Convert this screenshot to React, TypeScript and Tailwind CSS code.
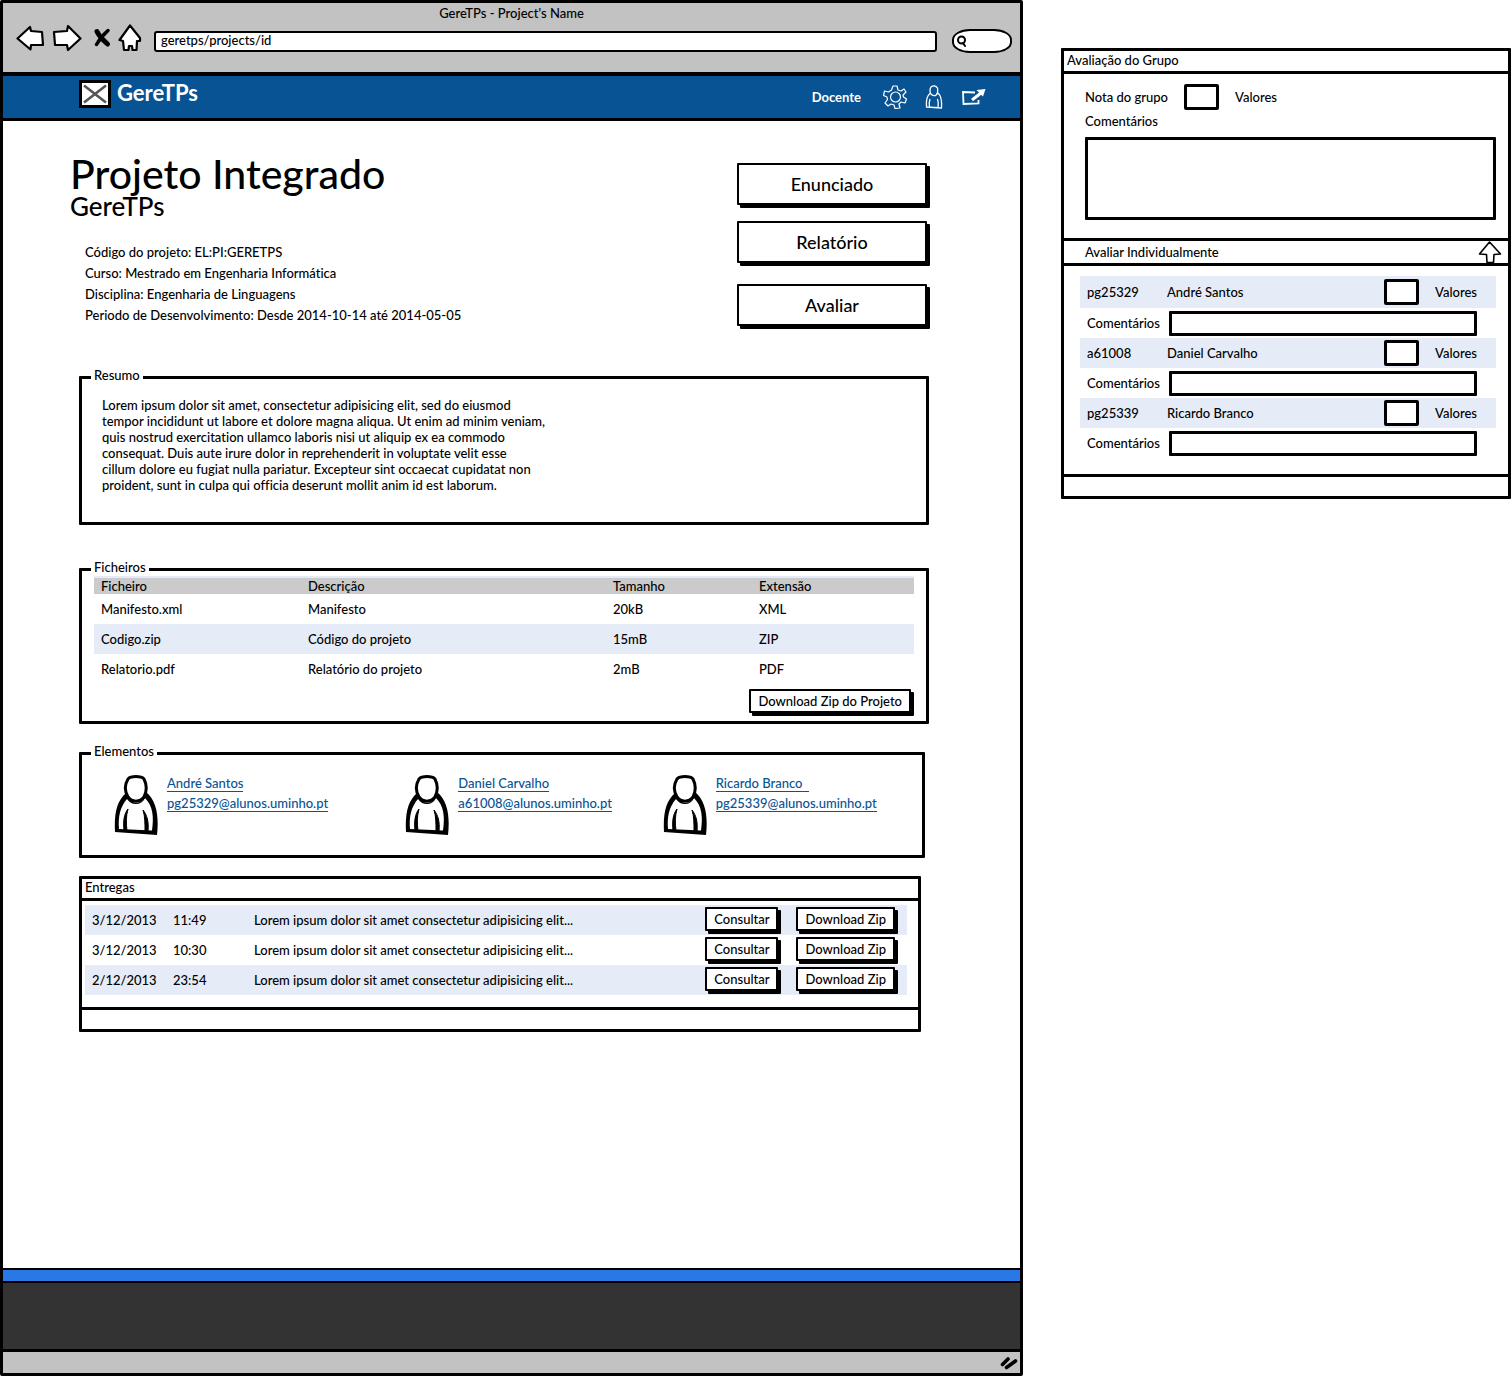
import type { ReactNode } from "react";

const files = [
  ["Manifesto.xml", "Manifesto", "20kB", "XML"],
  ["Codigo.zip", "Código do projeto", "15mB", "ZIP"],
  ["Relatorio.pdf", "Relatório do projeto", "2mB", "PDF"],
];

const members = [
  { id: "pg25329", name: "André Santos", link: "André Santos" },
  { id: "a61008", name: "Daniel Carvalho", link: "Daniel Carvalho" },
  { id: "pg25339", name: "Ricardo Branco", link: "Ricardo Branco\u00a0\u00a0" },
];

const deliveries = [
  ["3/12/2013", "11:49"],
  ["3/12/2013", "10:30"],
  ["2/12/2013", "23:54"],
];

const summary = `Lorem ipsum dolor sit amet, consectetur adipisicing elit, sed do eiusmod
tempor incididunt ut labore et dolore magna aliqua. Ut enim ad minim veniam,
quis nostrud exercitation ullamco laboris nisi ut aliquip ex ea commodo
consequat. Duis aute irure dolor in reprehenderit in voluptate velit esse
cillum dolore eu fugiat nulla pariatur. Excepteur sint occaecat cupidatat non
proident, sunt in culpa qui officia deserunt mollit anim id est laborum.`;

function BigButton({ children }: { children: ReactNode }) {
  return (
    <button className="h-[42px] w-full rounded-[1px] border-2 border-black bg-white text-lg leading-6 shadow-[3px_3px_0_#000]">
      {children}
    </button>
  );
}

function SmallButton({ children }: { children: ReactNode }) {
  return (
    <button className="h-6 rounded-[1px] border-2 border-black bg-white px-[7px] leading-4 whitespace-nowrap shadow-[3px_3px_0_#000]">
      {children}
    </button>
  );
}

function Group({ title, className, children }: { title: string; className: string; children: ReactNode }) {
  return (
    <fieldset className={`min-w-0 rounded-[1px] border-3 border-black ${className}`}>
      <legend className="ml-[9px] px-[3px] pb-1 leading-4">{title}</legend>
      {children}
    </fieldset>
  );
}

function Person() {
  return (
    <svg viewBox="0 0 44 60" className="h-[60px] w-11 shrink-0" aria-hidden="true">
      <path d="M12 18C3 26 0 38 1 57L43 60C45 42 43 26 32 17C31 24 27 28 22 28C17 27 14 24 12 18Z" fill="#000" />
      <path d="M13 24C6 32 4 42 5 54L38 55.500C40 42 39 31 31 23C29 27 26 29 22 29C18 29 15 27 13 24Z" fill="#fff" />
      <path d="M14 34C10 39 9 46 10 56L13 56C12 48 12 41 14 34Z" fill="#000" stroke="#000" />
      <path d="M29 35C31 41 31 49 31 56L34 56C35 47 33 40 29 35Z" fill="#000" stroke="#000" />
      <path d="M14 4C17 .800 27 .800 30 4C33 10 33 16 30 22C26 27.500 18 27.500 14 22C10.500 16 11 9 14 4Z" fill="#fff" stroke="#000" strokeWidth="3" />
    </svg>
  );
}

function BrowserBar() {
  return (
    <header className="flex h-[69px] flex-col bg-[#c2c2c2]">
      <h2 className="pt-0.5 text-center leading-4">GereTPs - Project's Name</h2>
      <div className="mt-0.5 flex items-center pr-2 pl-[13px]">
        <button aria-label="Voltar">
          <svg viewBox="0 0 28 26" className="h-[26px] w-7" fill="#fff" stroke="#000" strokeWidth="2.2" strokeLinejoin="round">
            <path d="M1.5 13.5L14 2L15 6L26 7L27 20L15 20L14.500 24.500Z" />
          </svg>
        </button>
        <button aria-label="Avançar" className="ml-2">
          <svg viewBox="0 0 30 28" className="h-7 w-[30px]" fill="#fff" stroke="#000" strokeWidth="2.2" strokeLinejoin="round">
            <path d="M2 8L15 7L16 2L28.500 14.500L16 26L15 21L3 21Z" />
          </svg>
        </button>
        <button aria-label="Parar" className="ml-2.5">
          <svg viewBox="0 0 20 20" className="size-5" fill="none" stroke="#000" strokeLinecap="round">
            <path d="M5 3.500C7 8 11 12 15.500 16" strokeWidth="5" />
            <path d="M16 2.500C11 7 7 12 4.500 16.500" strokeWidth="3.500" />
          </svg>
        </button>
        <button aria-label="Início" className="ml-1.5">
          <svg viewBox="0 0 24 28" className="h-7 w-6" fill="#fff" stroke="#000" strokeWidth="2.200" strokeLinejoin="round">
            <path d="M12 1.500L22 14L22 17L19 17L18.500 26L14.500 26L14 22L11 22L10.500 26L6 26L5 17L1.500 16Z" />
          </svg>
        </button>
        <input
          aria-label="Endereço"
          defaultValue="geretps/projects/id"
          className="mt-1.5 ml-3 h-[21px] min-w-0 flex-1 rounded-[3px] border-2 border-black bg-white px-[5px] pb-0.5 leading-4"
        />
        <div className="relative mt-1.5 ml-[15px]">
          <input aria-label="Pesquisar" className="h-6 w-[60px] rounded-[30%/45%] border-2 border-black bg-white pl-4" />
          <svg viewBox="0 0 12 14" className="absolute top-[6px] left-1 h-3.5 w-3" fill="none" stroke="#000" strokeWidth="2" strokeLinecap="round">
            <circle cx="5.500" cy="5" r="3.500" />
            <path d="M7 8L9 11" />
          </svg>
        </div>
      </div>
    </header>
  );
}

function NavBar() {
  return (
    <nav className="flex h-[49px] items-center border-t-4 border-b-3 border-black bg-[#085394] pr-[33px] pl-[76px] text-white">
      <svg viewBox="0 0 32 28" className="-mt-1.5 h-7 w-8" aria-hidden="true">
        <rect x="1.500" y="1.500" width="29" height="25" fill="#fff" stroke="#000" strokeWidth="3" />
        <path d="M5 5.500L27 22.500M27 5.500L5 22.500" stroke="#555" strokeWidth="2.600" />
      </svg>
      <span className="-mt-2 ml-1.5 text-[22px] leading-6 font-bold">GereTPs</span>
      <span className="ml-auto font-bold">Docente</span>
      <button aria-label="Definições" className="ml-[22px]">
        <svg viewBox="0 0 24 24" className="size-6" fill="none" stroke="#fff" strokeWidth="1.200" strokeLinejoin="round">
          <path d="M10 1L14 1L15 5L18 6L21 4L23 7L20 10L20.500 12L23.500 14L22 18L18 17L16 19L17 23L12 23.500L11 20L8 19L5 21L2 18L4.500 14.500L4 12L.500 10.500L1.500 6L5.500 7L8.500 5Z" />
          <circle cx="12.500" cy="12" r="5" />
        </svg>
      </button>
      <button aria-label="Perfil" className="ml-[18px]">
        <svg viewBox="0 0 18 24" className="h-6 w-[18px]" fill="none" stroke="#fff" strokeWidth="1.300" strokeLinejoin="round">
          <path d="M6 2C8 .500 11 .500 12.500 3C13 6 13 9 10.500 10.500C7 11 5 9 5 6C5 4 5 3 6 2ZM5.500 8C2 11 1 14 1.500 22L16.500 23C17 16 16.500 11 13 8M5 14C4 17 4 19 4.500 22M12.500 14C13.500 17 13.500 20 13 23" />
        </svg>
      </button>
      <button aria-label="Sair" className="ml-[18px]">
        <svg viewBox="0 0 26 18" className="h-[18px] w-[26px]" fill="none" stroke="#fff" strokeWidth="1.800">
          <path d="M14 4.500L2 4L2.500 16L17.500 15.500L17.500 12" />
          <path d="M11 12L20 5" strokeWidth="3" />
          <path d="M15.500 2L24.500 1L22 8.500Z" fill="#fff" stroke="none" />
        </svg>
      </button>
    </nav>
  );
}

function Project() {
  return (
    <main className="flex-1 pt-[33px] pr-[91px] pb-10 pl-[67px]">
      <div className="flex items-start justify-between">
        <div>
          <h1 className="text-[41px] leading-10">Projeto Integrado</h1>
          <p className="text-[26px] leading-6">GereTPs</p>
          <div className="mt-6 ml-[15px] leading-[21px]">
            <p>Código do projeto: EL:PI:GERETPS</p>
            <p>Curso: Mestrado em Engenharia Informática</p>
            <p>Disciplina: Engenharia de Linguagens</p>
            <p>Periodo de Desenvolvimento: Desde 2014-10-14 até 2014-05-05</p>
          </div>
        </div>
        <div className="mt-[9px] mr-0.5 flex w-[190px] flex-col">
          <BigButton>Enunciado</BigButton>
          <div className="mt-4 mb-[21px]">
            <BigButton>Relatório</BigButton>
          </div>
          <BigButton>Avaliar</BigButton>
        </div>
      </div>

      <div className="ml-[9px]">
        <Group title="Resumo" className="mt-[41px] pb-[29px]">
          <p className="pt-2.5 pl-5 leading-4 whitespace-pre-line">{summary}</p>
        </Group>

        <Group title="Ficheiros" className="mt-[34px] pb-2">
          <div className="px-3">
            <table className="-mt-[3px] w-full table-fixed border-t-2 border-[#e6ecf7] text-left">
              <colgroup>
                <col className="w-[207px]" />
                <col className="w-[305px]" />
                <col className="w-[146px]" />
                <col />
              </colgroup>
              <thead className="bg-[#cbcbcb] leading-4">
                <tr>
                  {["Ficheiro", "Descrição", "Tamanho", "Extensão"].map((head) => (
                    <th key={head} className="pl-[7px] font-medium">{head}</th>
                  ))}
                </tr>
              </thead>
              <tbody>
                {files.map((row) => (
                  <tr key={row[0]} className="h-[30px] even:bg-[#e6ecf7]">
                    {row.map((cell) => (
                      <td key={cell} className="pl-[7px]">{cell}</td>
                    ))}
                  </tr>
                ))}
              </tbody>
            </table>
            <div className="mt-[5px] mr-[3px] flex justify-end">
              <SmallButton>Download Zip do Projeto</SmallButton>
            </div>
          </div>
        </Group>

        <Group title="Elementos" className="mt-[19px] mr-1 pb-5">
          <ul className="grid grid-cols-[291fr_257fr_259fr] pt-3 pl-8">
            {members.map((m) => (
              <li key={m.id} className="flex">
                <Person />
                <div className="ml-[9px] flex flex-col items-start gap-[3px] text-[#085394]">
                  <a href="#perfil" className="border-b border-[#085394] leading-4">{m.link}</a>
                  <a href={`mailto:${m.id}@alunos.uminho.pt`} className="border-b border-[#085394] leading-4">
                    {m.id}@alunos.uminho.pt
                  </a>
                </div>
              </li>
            ))}
          </ul>
        </Group>

        <section className="mt-[18px] mr-2 rounded-[1px] border-3 border-black">
          <h2 className="border-b-3 border-black px-[3px] pb-[3px] leading-4">Entregas</h2>
          <div className="pt-1 pr-[11px] pb-3 pl-[3px]">
            <table className="w-full">
              <tbody>
                {deliveries.map(([date, time]) => (
                  <tr key={time} className="h-[30px] odd:bg-[#e6ecf7]">
                    <td className="w-[81px] pl-[7px]">{date}</td>
                    <td className="w-[81px] pl-[7px]">{time}</td>
                    <td className="pl-[7px]">Lorem ipsum dolor sit amet consectetur adipisicing elit...</td>
                    <td className="pr-3">
                      <div className="flex justify-end gap-[18px] pb-0.5">
                        <SmallButton>Consultar</SmallButton>
                        <SmallButton>Download Zip</SmallButton>
                      </div>
                    </td>
                  </tr>
                ))}
              </tbody>
            </table>
          </div>
          <div className="h-[22px] border-t-3 border-black" />
        </section>
      </div>
    </main>
  );
}

function Grading() {
  return (
    <aside className="mt-12 w-[450px] shrink-0 rounded-[1px] border-3 border-black">
      <h2 className="border-b-3 border-black px-[3px] pb-0.5 leading-[18px]">Avaliação do Grupo</h2>
      <div className="pt-2.5 pr-3 pb-[18px] pl-[21px]">
        <div className="flex items-center">
          <label htmlFor="group-grade" className="w-[99px]">Nota do grupo</label>
          <input id="group-grade" className="h-[26px] w-[35px] rounded-[2px] border-3 border-black bg-white text-center" />
          <span className="ml-4">Valores</span>
        </div>
        <label htmlFor="group-comments" className="mt-[3px] block leading-4">Comentários</label>
        <textarea id="group-comments" className="mt-2 block h-[83px] w-full resize-none rounded-[1px] border-3 border-black bg-white px-1" />
      </div>
      <div className="flex h-7 items-center justify-between border-y-3 border-black pr-1.5 pl-[21px]">
        <h3>Avaliar Individualmente</h3>
        <button aria-label="Recolher">
          <svg viewBox="0 0 24 22" className="h-[22px] w-6" fill="#fff" stroke="#000" strokeWidth="1.600" strokeLinejoin="round">
            <path d="M11.500 1L22.500 13L16 13.500L15.500 21.500L9 21.500L8.500 13.500L1.500 13Z" />
          </svg>
        </button>
      </div>
      <div className="pt-2.5 pr-3 pb-4 pl-4">
        {members.map((m, i) => (
          <div key={m.id}>
            <div className={`flex items-center bg-[#e6ecf7] pr-[19px] pl-[7px] ${i === 0 ? "h-8" : "h-[30px]"}`}>
              <span className="w-20">{m.id}</span>
              <label htmlFor={`grade-${m.id}`}>{m.name}</label>
              <input id={`grade-${m.id}`} className="ml-auto h-[26px] w-[35px] rounded-[2px] border-3 border-black bg-white text-center" />
              <span className="w-[58px] pl-4">Valores</span>
            </div>
            <div className="flex h-[30px] items-center pr-[19px] pl-[7px]">
              <label htmlFor={`comment-${m.id}`} className="w-[82px] shrink-0">Comentários</label>
              <input id={`comment-${m.id}`} className="h-[25px] min-w-0 flex-1 rounded-[1px] border-3 border-black bg-white px-1" />
            </div>
          </div>
        ))}
      </div>
      <div className="h-[22px] border-t-3 border-black" />
    </aside>
  );
}

export default function App() {
  return (
    <div className="flex min-h-screen items-stretch gap-[38px] bg-white font-[Lato,'Open_Sans',sans-serif] text-[13px] leading-4 font-medium text-black [font-variant-ligatures:none]">
      <div className="flex min-w-0 flex-1 flex-col rounded-[2px] border-3 border-black">
        <BrowserBar />
        <NavBar />
        <Project />
        <div className="h-[15px] border-y-2 border-black bg-[#2a77e6]" />
        <div className="h-[66px] bg-[#333]" />
        <footer className="flex h-6 items-center justify-end border-t-3 border-black bg-[#c2c2c2] pr-0.5">
          <svg viewBox="0 0 18 14" className="h-3.5 w-[18px]" fill="none" stroke="#000" strokeWidth="3.600" strokeLinecap="round" aria-hidden="true">
            <path d="M2.500 8.500L8 3M6.500 11.500L15.500 5" />
          </svg>
        </footer>
      </div>
      <div>
        <Grading />
      </div>
    </div>
  );
}
